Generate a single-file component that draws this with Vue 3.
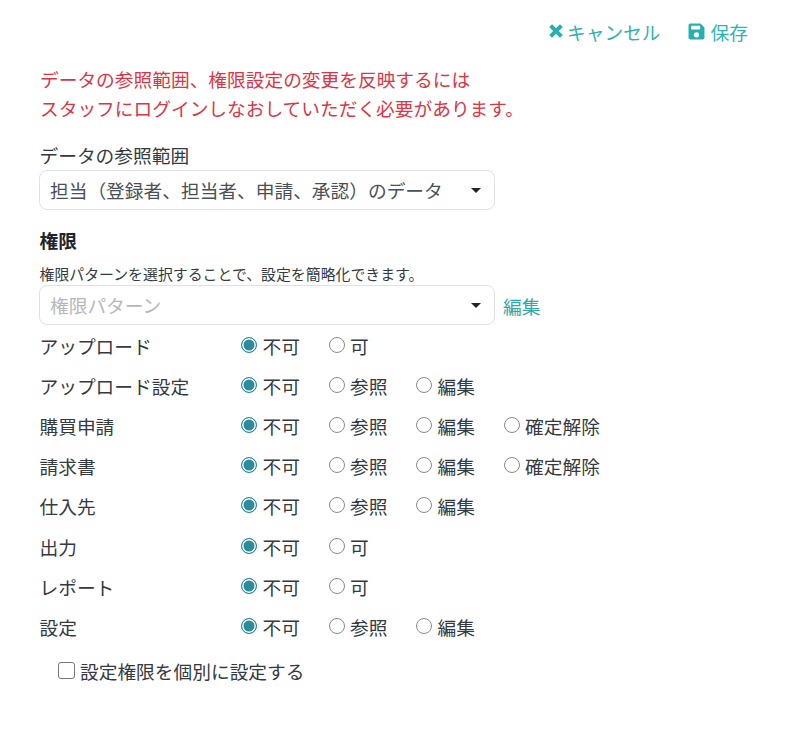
<script setup>
const rows = [
  { label: 'アップロード', options: ['不可', '可'] },
  { label: 'アップロード設定', options: ['不可', '参照', '編集'] },
  { label: '購買申請', options: ['不可', '参照', '編集', '確定解除'] },
  { label: '請求書', options: ['不可', '参照', '編集', '確定解除'] },
  { label: '仕入先', options: ['不可', '参照', '編集'] },
  { label: '出力', options: ['不可', '可'] },
  { label: 'レポート', options: ['不可', '可'] },
  { label: '設定', options: ['不可', '参照', '編集'] }
];
</script>

<template>
  <div class="page" lang="ja">
    <div class="actions">
      <a class="action">
        <svg class="icon-x" viewBox="0 0 14 14"><path d="M2.3 2.3l9.4 9.4M11.7 2.3l-9.4 9.4" /></svg>
        <span>キャンセル</span>
      </a>
      <a class="action">
        <svg class="icon-save" viewBox="0 0 16 16">
          <path fill-rule="evenodd" d="M2.2 0.5h9.6l3.7 3.7v9.6a1.7 1.7 0 0 1-1.7 1.7H2.2a1.7 1.7 0 0 1-1.7-1.7V2.2A1.7 1.7 0 0 1 2.2 0.5zM3 2.5v3.6h8.4V2.5zM8 8.6a2.5 2.5 0 1 0 0 5 2.5 2.5 0 0 0 0-5z" />
        </svg>
        <span>保存</span>
      </a>
    </div>

    <p class="alert">データの参照範囲、権限設定の変更を反映するには<br />スタッフにログインしなおしていただく必要があります。</p>

    <label class="field-label">データの参照範囲</label>
    <div class="select">
      <span>担当（登録者、担当者、申請、承認）のデータ</span>
      <i class="caret"></i>
    </div>

    <h3 class="heading">権限</h3>
    <p class="hint">権限パターンを選択することで、設定を簡略化できます。</p>
    <div class="pattern">
      <div class="select placeholder">
        <span>権限パターン</span>
        <i class="caret"></i>
      </div>
      <a class="edit-link">編集</a>
    </div>

    <div class="rows">
      <div v-for="row in rows" :key="row.label" class="row">
        <div class="row-label">{{ row.label }}</div>
        <div class="options">
          <label v-for="(opt, i) in row.options" :key="opt" class="option">
            <span class="radio" :class="{ checked: i === 0 }"></span>
            <span>{{ opt }}</span>
          </label>
        </div>
      </div>
    </div>

    <label class="check">
      <span class="box"></span>
      <span>設定権限を個別に設定する</span>
    </label>
  </div>
</template>

<style scoped>
.page {
  box-sizing: border-box;
  width: 800px;
  height: 734px;
  padding: 19px 52px 0 40px;
  font-family: "Noto Sans CJK JP", "Noto Sans", sans-serif;
  font-size: 18.72px;
  color: #343a40;
  background: #fff;
}

.actions {
  display: flex;
  justify-content: flex-end;
  gap: 27px;
  height: 24px;
  align-items: center;
  color: #2fb3b3;
}

.action {
  display: flex;
  align-items: center;
  gap: 3px;
}

.icon-x {
  width: 16px;
  height: 16px;
  fill: none;
  stroke: #26b0b0;
  stroke-width: 3.6;
}

.icon-save {
  width: 17px;
  height: 17px;
  fill: #26b0b0;
  margin-right: 3px;
}

.alert {
  margin: 21px 0 0;
  line-height: 29px;
  color: #dc3545;
}

.field-label {
  display: block;
  margin: 20px 0 0 -0.5px;
  line-height: 26px;
}

.select {
  box-sizing: border-box;
  width: 456px;
  height: 40px;
  margin: 2px 0 0 -1px;
  padding: 0 10px 2px;
  display: flex;
  align-items: center;
  justify-content: space-between;
  border: 1px solid #dee2e6;
  border-radius: 8px;
  color: #495057;
}

.placeholder {
  margin-top: 0;
  color: #b4b8bc;
}

.caret {
  width: 0;
  height: 0;
  margin: 2px 3px 0 0;
  border-left: 5.5px solid transparent;
  border-right: 5.5px solid transparent;
  border-top: 5.5px solid #212529;
}

.heading {
  margin: 17px 0 0 -0.5px;
  font-size: 18.72px;
  line-height: 26px;
  font-weight: 700;
  color: #212529;
}

.hint {
  margin: 9px 0 0 -0.5px;
  font-size: 14.9px;
  line-height: 23px;
  color: #343a40;
}

.pattern {
  display: flex;
  align-items: center;
  gap: 8px;
}

.edit-link {
  color: #2fa8a8;
}

.row {
  display: flex;
  align-items: center;
  height: 40.2px;
}

.row-label {
  width: 201.5px;
  margin-left: -0.5px;
  flex: none;
}

.options {
  display: flex;
  gap: 28.6px;
}

.option {
  display: flex;
  align-items: center;
  gap: 5.5px;
}

.radio {
  box-sizing: border-box;
  width: 16px;
  height: 16px;
  margin-top: -1px;
  border: 1.5px solid #8a8a8a;
  border-radius: 50%;
  background: #fff;
}

.radio.checked {
  border: 1.5px solid #2b8c9c;
  background: #2b8c9c;
  box-shadow: inset 0 0 0 1.5px #fff;
}

.check {
  display: flex;
  align-items: center;
  gap: 5px;
  margin: 10px 0 0 18px;
}

.box {
  box-sizing: border-box;
  width: 17px;
  height: 17px;
  border: 1.5px solid #777;
  border-radius: 3px;
}
</style>
